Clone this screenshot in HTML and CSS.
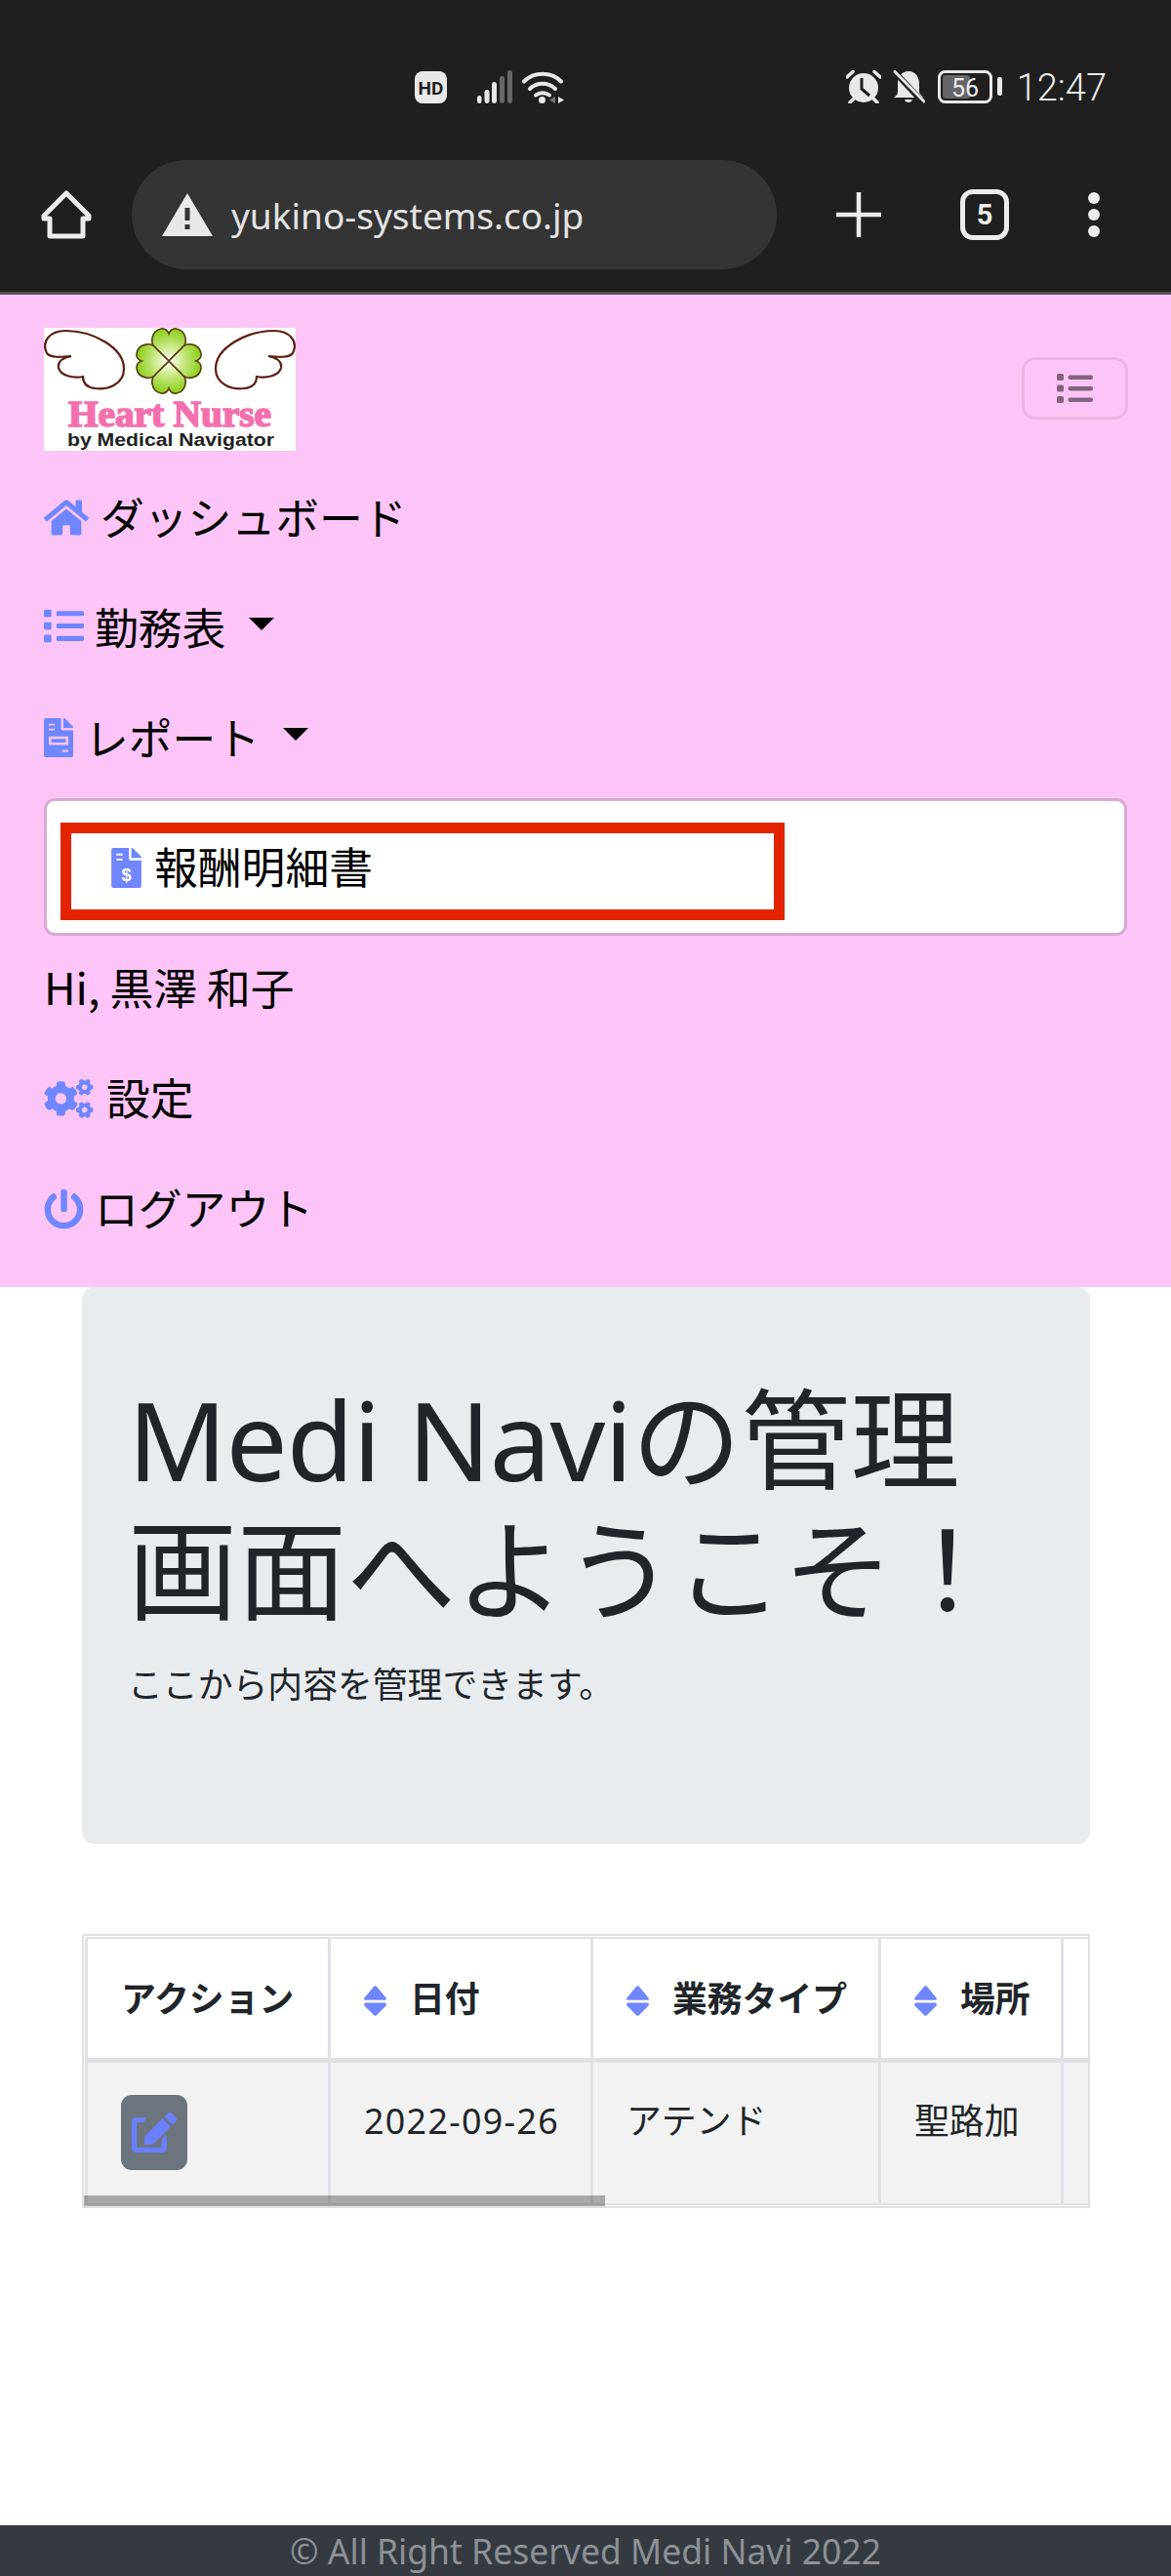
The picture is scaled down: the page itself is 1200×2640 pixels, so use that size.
FILE: index.html
```html
<!DOCTYPE html>
<html lang="ja">
<head>
<meta charset="utf-8">
<title>Medi Navi</title>
<link rel="stylesheet" href="styles.css">
</head>
<body>
<header class="chrome">
  <div class="status">
    <div class="status-left">
      <svg class="ic-hd" viewBox="0 0 33 33"><rect width="33" height="33" rx="8" fill="#e8e8e8"/><text x="16.5" y="23.5" text-anchor="middle" class="hd-text">HD</text></svg>
      <svg class="ic-signal" viewBox="0 0 36 34"><rect x="0" y="26" width="4.5" height="8" rx="2.2" fill="#e8e8e8"/><rect x="7.500" y="20" width="5" height="14" rx="2.400" fill="#e8e8e8"/><rect x="15" y="12" width="5" height="22" rx="2.400" fill="#e8e8e8"/><rect x="23" y="6" width="5" height="28" rx="2.400" fill="#666"/><rect x="31" y="0" width="5" height="34" rx="2.400" fill="#666"/></svg>
      <svg class="ic-wifi" viewBox="0 0 43 34"><g fill="none" stroke="#e8e8e8" stroke-width="4" stroke-linecap="round"><path d="M2 11.500C12 1 30 1 40 11.500"/><path d="M8 19C15 12 27 12 34 19"/><path d="M14 25.500C18 22.500 24 22.500 28 25.500"/></g><circle cx="20.500" cy="30.500" r="3.500" fill="#e8e8e8"/><path d="M34 27V34L28 30.500Z" fill="#777"/><path d="M37 27V34L43 30.500Z" fill="#e8e8e8"/></svg>
    </div>
    <div class="status-right">
      <svg class="ic-alarm" viewBox="0 0 36 34"><circle cx="18" cy="18" r="15" fill="#e8e8e8"/><path d="M16 8V19L24 26" fill="none" stroke="#1f1f1f" stroke-width="3"/><path d="M1 7L7 1.500M35 7L29 1.500M4 33L8 29M32 33L28 29" stroke="#e8e8e8" stroke-width="3.500" stroke-linecap="round"/></svg>
      <svg class="ic-bell" viewBox="0 0 33 34"><path d="M16 1C24 1 27 8 27 14V23L31 28H1C3 26 5 25 5 22V13C5 7 9 1 16 1Z" fill="#e8e8e8"/><path d="M12 30H20C19 34 13 34 12 30Z" fill="#e8e8e8"/><path d="M1 1L31 33" stroke="#1f1f1f" stroke-width="6"/><path d="M2 1.500L32 32" stroke="#e8e8e8" stroke-width="3" stroke-linecap="round"/></svg>
      <svg class="ic-battery" viewBox="0 0 66 34"><rect x="1.500" y="1.500" width="53" height="31" rx="6" fill="none" stroke="#e8e8e8" stroke-width="3"/><rect x="5" y="5" width="28" height="24" rx="3" fill="#666"/><rect x="61" y="7" width="5" height="19" rx="2" fill="#e8e8e8"/><text x="28" y="27" text-anchor="middle" class="batt-text">56</text></svg>
      <span class="clock">12:47</span>
    </div>
  </div>
  <div class="toolbar">
    <svg class="ic-home-outline" viewBox="0 0 52 50"><path d="M26 3L49 26V29H43V47H9V29H3V26Z" fill="none" stroke="#ececec" stroke-width="5" stroke-linejoin="round"/></svg>
    <div class="omnibox">
      <svg class="ic-warn" viewBox="0 0 52 44"><path d="M26 0L52 44H0Z" fill="#e8e8e8"/><rect x="23.500" y="15" width="5" height="13" fill="#343434"/><rect x="23.500" y="32" width="5" height="5" fill="#343434"/></svg>
      <span class="url">yukino-systems.co.jp</span>
    </div>
    <svg class="ic-plus" viewBox="0 0 46 46"><path d="M23 0V46M0 23H46" stroke="#ececec" stroke-width="4.500"/></svg>
    <div class="tabs">5</div>
    <div class="dots"><i></i><i></i><i></i></div>
  </div>
</header>

<nav class="nav">
  <div class="brand-row">
    <svg class="logo" viewBox="0 0 258 126">
      <defs>
        <radialGradient id="leaf" gradientUnits="userSpaceOnUse" cx="128" cy="34" r="32"><stop offset="0" stop-color="#ffffff"/><stop offset=".45" stop-color="#cdea8c"/><stop offset="1" stop-color="#8fd021"/></radialGradient>
      </defs>
      <rect width="258" height="126" fill="#fff"/>
      <path d="M3 26C-3 14 6 3 22 3C50 3 82 20 82 42C82 58 65 64 52 62C45 61 40 57 40 50C30 52 17 49 15 41C14 35 18 31 28 29C18 30 7 31 3 26Z" fill="#fff" stroke="#5b1f12" stroke-width="2.200"/>
      <path d="M255 26C261 14 252 3 236 3C208 3 176 20 176 42C176 58 193 64 206 62C213 61 218 57 218 50C228 52 241 49 243 41C244 35 240 31 230 29C240 30 251 31 255 26Z" fill="#fff" stroke="#5b1f12" stroke-width="2.200"/>
      <path d="M128 34L115 21C108 16 110 3 120 1C124 0 127 3 128 6C129 3 132 0 136 1C146 3 148 16 141 21Z" fill="url(#leaf)" stroke="#5a3a10" stroke-width="1.600"/>
      <path d="M128 34L115 47C108 52 110 65 120 67C124 68 127 65 128 62C129 65 132 68 136 67C146 65 148 52 141 47Z" fill="url(#leaf)" stroke="#5a3a10" stroke-width="1.600"/>
      <path d="M128 34L115 21C110 14 97 16 95 26C94 30 97 33 100 34C97 35 94 38 95 42C97 52 110 54 115 47Z" fill="url(#leaf)" stroke="#5a3a10" stroke-width="1.600"/>
      <path d="M128 34L141 21C146 14 159 16 161 26C162 30 159 33 156 34C159 35 162 38 161 42C159 52 146 54 141 47Z" fill="url(#leaf)" stroke="#5a3a10" stroke-width="1.600"/>
      <text x="25" y="101" class="logo-title" textLength="208" lengthAdjust="spacingAndGlyphs">Heart Nurse</text>
      <text x="24" y="121" class="logo-sub" textLength="212" lengthAdjust="spacingAndGlyphs">by Medical Navigator</text>
    </svg>
    <button class="toggler" type="button" aria-label="menu">
      <svg viewBox="0 0 37 30"><g fill="#83637f"><rect x="0" y="0" width="7" height="7" rx="1.500"/><rect x="0" y="11.500" width="7" height="7" rx="1.500"/><rect x="0" y="23" width="7" height="7" rx="1.500"/><rect x="11.500" y="1.500" width="25.500" height="4.500" rx="2"/><rect x="11.500" y="13" width="25.500" height="4.500" rx="2"/><rect x="11.500" y="24.500" width="25.500" height="4.500" rx="2"/></g></svg>
    </button>
  </div>
  <a class="item">
    <svg class="ni ni-home" viewBox="0 0 576 512"><path d="M280.37 148.26L96 300.11V464a16 16 0 0 0 16 16l112.06-.29a16 16 0 0 0 15.92-16V368a16 16 0 0 1 16-16h64a16 16 0 0 1 16 16v95.64a16 16 0 0 0 16 16.05L464 480a16 16 0 0 0 16-16V300L295.67 148.26a12.19 12.19 0 0 0-15.3 0zM571.6 251.47L488 182.56V44.05a12 12 0 0 0-12-12h-56a12 12 0 0 0-12 12v72.61L318.47 43a48 48 0 0 0-61 0L4.34 251.47a12 12 0 0 0-1.6 16.9l25.5 31A12 12 0 0 0 45.15 301l235.22-193.74a12.19 12.19 0 0 1 15.3 0L530.9 301a12 12 0 0 0 16.9-1.6l25.5-31a12 12 0 0 0-1.7-16.93z"/></svg>
    <span>ダッシュボード</span>
  </a>
  <a class="item">
    <svg class="ni ni-list" viewBox="0 0 512 512"><path d="M80 368H16a16 16 0 0 0-16 16v64a16 16 0 0 0 16 16h64a16 16 0 0 0 16-16v-64a16 16 0 0 0-16-16zm0-320H16A16 16 0 0 0 0 64v64a16 16 0 0 0 16 16h64a16 16 0 0 0 16-16V64a16 16 0 0 0-16-16zm0 160H16a16 16 0 0 0-16 16v64a16 16 0 0 0 16 16h64a16 16 0 0 0 16-16v-64a16 16 0 0 0-16-16zm416 176H176a16 16 0 0 0-16 16v32a16 16 0 0 0 16 16h320a16 16 0 0 0 16-16v-32a16 16 0 0 0-16-16zm0-320H176a16 16 0 0 0-16 16v32a16 16 0 0 0 16 16h320a16 16 0 0 0 16-16V80a16 16 0 0 0-16-16zm0 160H176a16 16 0 0 0-16 16v32a16 16 0 0 0 16 16h320a16 16 0 0 0 16-16v-32a16 16 0 0 0-16-16z"/></svg>
    <span>勤務表</span><i class="caret"></i>
  </a>
  <a class="item">
    <svg class="ni ni-file" viewBox="0 0 384 512"><path fill-rule="evenodd" d="M377 105L279.100 7c-4.500-4.500-10.600-7-17-7H256v128h128v-6.100c0-6.300-2.500-12.400-7-16.900zM224 136V0H24C10.700 0 0 10.700 0 24v464c0 13.300 10.700 24 24 24h336c13.300 0 24-10.700 24-24V160H248c-13.200 0-24-10.800-24-24zM64 72h80v24H64zM64 136h80v24H64zM64 240h256v112H64zM96 272v48h192v-48zM240 416h80v24h-80z"/></svg>
    <span>レポート</span><i class="caret"></i>
  </a>
  <div class="dropdown">
    <a class="sub-item">
      <svg class="ni ni-sub" viewBox="0 0 384 512"><path fill-rule="evenodd" d="M377 105L279.100 7c-4.500-4.500-10.600-7-17-7H256v128h128v-6.100c0-6.300-2.500-12.400-7-16.900zM224 136V0H24C10.700 0 0 10.700 0 24v464c0 13.300 10.700 24 24 24h336c13.300 0 24-10.700 24-24V160H248c-13.200 0-24-10.800-24-24zM64 72h80v24H64zM64 136h80v24H64z"/><text x="192" y="430" text-anchor="middle" class="dollar">$</text></svg>
      <span>報酬明細書</span>
    </a>
  </div>
  <div class="item"><span>Hi, 黒澤 和子</span></div>
  <a class="item">
    <svg class="ni ni-cogs" viewBox="0 0 640 512"><path d="M512.100 191l-8.200 14.300c-3 5.300-9.400 7.500-15.100 5.400-11.800-4.400-22.600-10.700-32.100-18.600-4.600-3.800-5.800-10.500-2.800-15.700l8.200-14.300c-6.900-8-12.300-17.300-15.900-27.400h-16.500c-6 0-11.200-4.300-12.200-10.300-2-12-2.100-24.600 0-37.100 1-6 6.200-10.400 12.200-10.400h16.500c3.600-10.100 9-19.400 15.900-27.400l-8.200-14.300c-3-5.200-1.900-11.900 2.800-15.700 9.500-7.900 20.400-14.200 32.100-18.600 5.700-2.100 12.100.1 15.100 5.400l8.200 14.300c10.500-1.900 21.200-1.900 31.700 0L552 6.300c3-5.300 9.400-7.500 15.100-5.400 11.800 4.400 22.600 10.700 32.100 18.600 4.600 3.800 5.800 10.500 2.800 15.700l-8.200 14.300c6.900 8 12.300 17.300 15.900 27.400h16.500c6 0 11.200 4.300 12.200 10.300 2 12 2.100 24.600 0 37.100-1 6-6.200 10.400-12.200 10.400h-16.500c-3.600 10.100-9 19.400-15.900 27.400l8.200 14.300c3 5.200 1.900 11.900-2.800 15.700-9.500 7.900-20.400 14.200-32.100 18.600-5.700 2.100-12.100-.1-15.100-5.400l-8.200-14.300c-10.400 1.900-21.200 1.900-31.700 0zm-10.500-58.800c38.500 29.600 82.400-14.300 52.800-52.800-38.500-29.700-82.400 14.300-52.800 52.800zM386.300 286.100l33.700 16.800c10.100 5.800 14.500 18.100 10.500 29.100-8.900 24.200-26.400 46.400-42.600 65.800-7.400 8.900-20.200 11.100-30.300 5.300l-29.100-16.800c-16 13.700-34.600 24.600-54.900 31.700v33.600c0 11.600-8.300 21.600-19.700 23.600-24.600 4.200-50.400 4.400-75.900 0-11.500-2-20-11.900-20-23.600V418c-20.300-7.200-38.900-18-54.900-31.700L74 403c-10 5.800-22.900 3.600-30.300-5.300-16.200-19.400-33.300-41.600-42.200-65.700-4-10.900.4-23.200 10.500-29.100l33.300-16.800c-3.900-20.900-3.900-42.400 0-63.400L12 205.800c-10.100-5.800-14.600-18.100-10.500-29 8.900-24.200 26-46.400 42.200-65.800 7.400-8.900 20.200-11.100 30.300-5.300l29.100 16.800c16-13.700 34.600-24.600 54.900-31.700V57.100c0-11.500 8.200-21.500 19.600-23.500 24.600-4.200 50.500-4.400 76-.1 11.500 2 20 11.900 20 23.600v33.600c20.300 7.200 38.900 18 54.900 31.700l29.100-16.800c10-5.800 22.900-3.600 30.300 5.300 16.200 19.400 33.200 41.600 42.100 65.800 4 10.900.1 23.200-10 29.100l-33.700 16.800c3.900 21 3.900 42.500 0 63.500zm-117.600 21.100c59.200-77-28.700-164.900-105.700-105.700-59.200 77 28.700 164.900 105.700 105.700zm243.400 182.700l-8.200 14.300c-3 5.300-9.400 7.500-15.100 5.400-11.800-4.400-22.600-10.700-32.100-18.600-4.600-3.800-5.800-10.500-2.800-15.700l8.200-14.300c-6.900-8-12.300-17.300-15.900-27.400h-16.500c-6 0-11.200-4.300-12.200-10.300-2-12-2.100-24.600 0-37.100 1-6 6.200-10.400 12.200-10.400h16.500c3.600-10.100 9-19.400 15.900-27.400l-8.200-14.300c-3-5.200-1.900-11.900 2.800-15.700 9.500-7.900 20.400-14.200 32.100-18.600 5.700-2.100 12.100.1 15.100 5.400l8.200 14.300c10.500-1.900 21.200-1.900 31.700 0l8.200-14.300c3-5.300 9.400-7.500 15.100-5.400 11.800 4.400 22.600 10.700 32.100 18.600 4.600 3.800 5.800 10.500 2.800 15.700l-8.200 14.300c6.900 8 12.300 17.300 15.900 27.400h16.500c6 0 11.200 4.300 12.200 10.300 2 12 2.100 24.600 0 37.100-1 6-6.200 10.400-12.200 10.400h-16.500c-3.600 10.100-9 19.400-15.900 27.400l8.200 14.300c3 5.200 1.900 11.900-2.800 15.700-9.500 7.900-20.400 14.200-32.100 18.600-5.700 2.100-12.100-.1-15.100-5.400l-8.200-14.300c-10.400 1.900-21.200 1.900-31.700 0zM501.600 431c38.500 29.600 82.400-14.300 52.800-52.800-38.500-29.600-82.400 14.300-52.800 52.800z"/></svg>
    <span>設定</span>
  </a>
  <a class="item">
    <svg class="ni ni-power" viewBox="0 0 512 512"><path d="M400 54.100c63 45 104 118.600 104 201.900 0 136.800-110.800 247.700-247.500 248C120 504.300 8.200 393 8 256.400 7.900 173.100 48.900 99.300 111.800 54.200c11.700-8.300 28-4.800 35 7.700L162.600 90c5.900 10.500 3.100 23.800-6.600 31-41.500 30.800-68 79.600-68 134.900-.1 92.300 74.500 168.100 168 168.100 91.600 0 168.600-74.200 168-169.100-.3-51.800-24.700-101.800-68.100-134-9.700-7.200-12.400-20.500-6.500-30.900l15.800-28.100c7-12.400 23.200-16.100 34.800-7.800zM296 264V24c0-13.300-10.700-24-24-24h-32c-13.300 0-24 10.700-24 24v240c0 13.300 10.700 24 24 24h32c13.300 0 24-10.700 24-24z"/></svg>
    <span>ログアウト</span>
  </a>
</nav>

<main class="content">
  <section class="hero">
    <h1><span class="latin">Medi Navi</span>の管理<br>画面へようこそ！</h1>
    <p>ここから内容を管理できます。</p>
  </section>
  <div class="table-wrap">
    <table>
      <colgroup><col class="c1"><col class="c2"><col class="c3"><col class="c4"><col class="c5"></colgroup>
      <thead>
        <tr>
          <th>アクション</th>
          <th><svg class="sort" viewBox="16 9 288 382"><path d="M41 224h238c21.400 0 32.100 25.900 17 41L177 384c-9.400 9.400-24.600 9.400-33.900 0L24 265c-15.100-15.100-4.400-41 17-41zm255-64L177 16c-9.400-9.400-24.600-9.400-33.900 0L24 160c-15.100 15.100-4.400 32 17 32h238c21.400 0 32.100-16.900 17-32z"/></svg>日付</th>
          <th><svg class="sort" viewBox="16 9 288 382"><path d="M41 224h238c21.400 0 32.100 25.900 17 41L177 384c-9.400 9.400-24.600 9.400-33.900 0L24 265c-15.100-15.100-4.400-41 17-41zm255-64L177 16c-9.400-9.400-24.600-9.400-33.900 0L24 160c-15.100 15.100-4.400 32 17 32h238c21.400 0 32.100-16.900 17-32z"/></svg>業務タイプ</th>
          <th><svg class="sort" viewBox="16 9 288 382"><path d="M41 224h238c21.400 0 32.100 25.900 17 41L177 384c-9.400 9.400-24.600 9.400-33.900 0L24 265c-15.100-15.100-4.400-41 17-41zm255-64L177 16c-9.400-9.400-24.600-9.400-33.900 0L24 160c-15.100 15.100-4.400 32 17 32h238c21.400 0 32.100-16.900 17-32z"/></svg>場所</th>
          <th></th>
        </tr>
      </thead>
      <tbody>
        <tr>
          <td><button class="edit" type="button" aria-label="edit"><svg viewBox="0 0 576 512"><path d="M402.600 83.200l90.200 90.200c3.800 3.800 3.800 10 0 13.800L274.400 405.600l-92.800 10.300c-12.400 1.400-22.900-9.100-21.500-21.500l10.300-92.800L388.800 83.200c3.800-3.800 10-3.800 13.800 0zm162-22.900l-48.800-48.800c-15.200-15.200-39.900-15.200-55.200 0l-35.400 35.400c-3.800 3.800-3.800 10 0 13.800l90.200 90.200c3.800 3.800 10 3.800 13.800 0l35.400-35.400c15.200-15.300 15.200-40 0-55.200zM384 346.200V448H64V128h73.200c3.200 0 6.200-1.300 8.500-3.500l40-40c7.600-7.600 2.200-20.500-8.500-20.500H48C21.500 64 0 85.500 0 112v352c0 26.500 21.500 48 48 48h352c26.500 0 48-21.500 48-48V306.200c0-10.700-12.900-16-20.500-8.500l-40 40c-2.200 2.300-3.500 5.300-3.500 8.500z"/></svg></button></td>
          <td class="date">2022-09-26</td>
          <td>アテンド</td>
          <td>聖路加</td>
          <td></td>
        </tr>
      </tbody>
    </table>
    <div class="scroll-thumb"></div>
  </div>
</main>

<footer class="footer">© All Right Reserved Medi Navi 2022</footer>
</body>
</html>
```

FILE: styles.css
```css
* { box-sizing: border-box; }
html, body { margin: 0; padding: 0; }
body {
  width: 1200px;
  height: 2640px;
  overflow: hidden;
  display: flex;
  flex-direction: column;
  background: #fff;
  font-family: "Noto Sans", "Noto Sans CJK JP", sans-serif;
  color: #212529;
}

/* Browser chrome */
.chrome {
  height: 302px;
  flex: none;
  background: #1f1f1f;
  border-bottom: 3px solid #545054;
  padding-top: 72px;
}
.status {
  display: flex;
  align-items: center;
  height: 34px;
  padding: 0 66px 0 425px;
}
.status-left, .status-right { display: flex; align-items: center; }
.status-right { margin-left: auto; }
.ic-hd { width: 33px; height: 33px; margin-right: 31px; }
.hd-text { font: 700 19px "Roboto", sans-serif; fill: #1f1f1f; }
.ic-signal { width: 36px; height: 34px; margin-right: 10px; }
.ic-wifi { width: 43px; height: 34px; }
.ic-alarm { width: 36px; height: 34px; margin-right: 12px; }
.ic-bell { width: 33px; height: 34px; margin-right: 13px; }
.ic-battery { width: 66px; height: 34px; margin-right: 15px; }
.batt-text { font: 400 25px "Roboto", sans-serif; fill: #ececec; }
.clock { font: 300 38px/38px "Roboto", sans-serif; color: #ececec; margin-top: 2px; }

.toolbar {
  display: flex;
  align-items: center;
  height: 112px;
  margin-top: 58px;
  padding-left: 42px;
}
.ic-home-outline { width: 52px; height: 50px; margin-right: 41px; }
.omnibox {
  width: 661px;
  height: 112px;
  border-radius: 56px;
  background: #343434;
  display: flex;
  align-items: center;
  padding-left: 31px;
}
.ic-warn { width: 52px; height: 44px; margin-right: 19px; }
.url { font: 400 37px "Noto Sans", sans-serif; color: #e3e3e3; }
.ic-plus { width: 46px; height: 46px; margin-left: 61px; }
.tabs {
  width: 50px;
  height: 52px;
  margin-left: 81px;
  border: 5px solid #ececec;
  border-radius: 13px;
  color: #ececec;
  font: 700 29px/42px "Roboto", sans-serif;
  text-align: center;
}
.dots {
  margin-left: 81px;
  display: flex;
  flex-direction: column;
  gap: 5px;
}
.dots i { width: 12px; height: 12px; border-radius: 50%; background: #ececec; display: block; }

/* Pink navbar */
.nav {
  height: 1017px;
  flex: none;
  background: #fdc5f7;
  padding: 34px 45px 0;
  color: #000;
  font-size: 44.800px;
  font-family: "Noto Sans CJK JP", "Noto Sans", sans-serif;
}
.brand-row { display: flex; justify-content: space-between; align-items: flex-start; }
.logo { width: 258px; height: 126px; display: block; }
.logo-title { font: 700 37px "Liberation Serif", serif; fill: #f46fae; stroke: #f46fae; stroke-width: 1.600px; }
.logo-sub { font: 700 18px "Liberation Sans", sans-serif; fill: #222; }
.toggler {
  width: 109px;
  height: 64px;
  margin: 30px -1px 0 0;
  padding: 0;
  background: transparent;
  border: 3px solid rgba(0, 0, 0, .08);
  border-radius: 14px;
  display: flex;
  align-items: center;
  justify-content: center;
}
.toggler svg { width: 37px; height: 30px; display: block; }
.item {
  display: flex;
  align-items: center;
  height: 113px;
  line-height: 66px;
  color: #000;
  white-space: pre;
}
.brand-row + .item { margin-top: 10px; }
.ni { fill: #6f86ff; display: block; flex: none; }
.ni-home { width: 46px; height: 41px; margin: 3px 12px 0 0; }
.ni-list { width: 41px; height: 41px; margin-right: 11px; }
.ni-file { width: 30px; height: 40px; margin: 2px 12px 0 0; }
.ni-sub { width: 31px; height: 41px; margin-right: 13px; }
.ni-cogs { width: 51px; height: 40px; margin: 5px 13px 0 0; }
.ni-power { width: 41px; height: 41px; margin: 5px 11px 0 0; }
.dollar { font: 700 230px "Liberation Sans", sans-serif; fill: #fff; }
.caret {
  display: block;
  width: 0;
  height: 0;
  margin: -5px 0 0 24px;
  border-top: 13px solid #000;
  border-left: 13.500px solid transparent;
  border-right: 13.500px solid transparent;
}
.dropdown {
  margin-top: 7px;
  height: 141px;
  background: #fff;
  border: 3px solid #d8a9d3;
  border-radius: 11px;
  padding: 22px 0 0 14px;
}
.dropdown + .item { margin-top: -5px; }
.sub-item {
  width: 742px;
  height: 100px;
  border: 11px solid #e22500;
  display: flex;
  align-items: center;
  padding: 0 0 7px 41px;
  line-height: 66px;
}
.sub-item span { margin-bottom: 6px; }

/* Content */
.content { padding: 0 83px 0 84px; flex: none; }
.hero {
  height: 571px;
  background: #e9ecef;
  border-radius: 13px;
  padding: 89px 47px 0;
}
.hero h1 {
  margin: 0;
  font-size: 112px;
  line-height: 134px;
  font-weight: 400;
  color: #212529;
}
.latin { letter-spacing: -1px; }
.hero p {
  margin: 24px 0 0;
  font-size: 35.840px;
  line-height: 53px;
  font-weight: 400;
  color: #212529;
}
.table-wrap {
  position: relative;
  margin-top: 92px;
  height: 281px;
  border: 2px solid #dee2e6;
  padding: 1px 0 0 1px;
  overflow: hidden;
}
table {
  border-collapse: separate;
  border-spacing: 0;
  table-layout: fixed;
  width: 1300px;
  border-left: 3px solid #dee2e6;
  border-top: 2px solid #dee2e6;
  font-size: 35.840px;
  line-height: 53px;
}
.c1 { width: 249px; }
.c2 { width: 269px; }
.c3 { width: 295px; }
.c4 { width: 187px; }
.c5 { width: 300px; }
th, td {
  padding: 0 0 0 34px;
  border-right: 3px solid #dee2e6;
  text-align: left;
  white-space: nowrap;
  color: #212529;
}
th {
  height: 127px;
  border-bottom: 5px solid #dee2e6;
  background: #fff;
  font-weight: 700;
  vertical-align: middle;
}
td {
  height: 146px;
  padding-top: 33px;
  border-bottom: 2px solid #dee2e6;
  background: #f2f2f2;
  vertical-align: top;
  font-weight: 400;
}
.date { letter-spacing: 1.300px; }
.sort {
  width: 23px;
  height: 31px;
  fill: #6f86ff;
  margin-right: 24px;
  vertical-align: -4px;
}
.edit {
  width: 68px;
  height: 77px;
  padding: 0;
  border: none;
  border-radius: 11px;
  background: #6c757d;
  display: flex;
  align-items: center;
  justify-content: center;
}
.edit svg { width: 46px; height: 41px; fill: #6a80ff; display: block; }
.scroll-thumb {
  position: absolute;
  left: 0;
  bottom: 0;
  width: 534px;
  height: 11px;
  background: rgba(0, 0, 0, .3);
}

.footer {
  margin-top: auto;
  height: 52px;
  flex: none;
  background: #343a40;
  color: #8e9195;
  text-align: center;
  font: 400 35.500px/52px "Noto Sans", sans-serif;
}
```
